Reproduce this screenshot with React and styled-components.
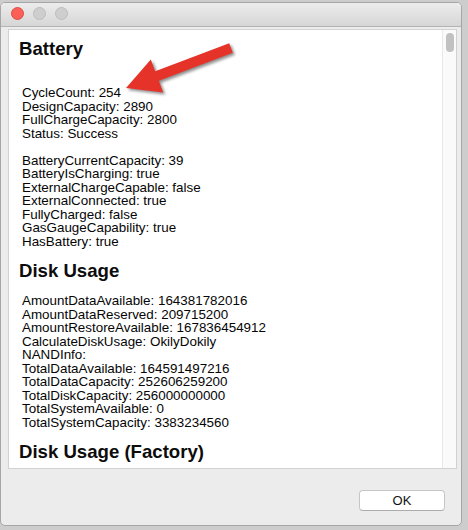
import React from 'react';
import styled, { createGlobalStyle } from 'styled-components';

const GlobalStyle = createGlobalStyle`
  html, body {
    margin: 0;
    padding: 0;
  }
  body {
    width: 468px;
    height: 530px;
    overflow: hidden;
    background: #cdcdcd;
    font-family: "Liberation Sans", Arial, sans-serif;
    color: #000;
  }
`;

const Window = styled.div`
  position: relative;
  box-sizing: border-box;
  margin-top: 2px;
  width: 462px;
  height: 524px;
  border: 1px solid #a6a6a6;
  border-radius: 5px;
  background: #ececec;
  display: flex;
  flex-direction: column;
  overflow: hidden;
`;

const TitleBar = styled.div`
  flex: none;
  height: 24px;
  box-sizing: border-box;
  padding: 4px 0 0 10px;
  display: flex;
  align-items: flex-start;
  gap: 9px;
  background: linear-gradient(#ececec, #d6d6d6);
  border-bottom: 1px solid #b4b4b4;
`;

const Light = styled.span`
  width: 11px;
  height: 11px;
  border-radius: 50%;
  background: ${p => (p.red ? '#fc5f57' : '#cecece')};
  border: 0.5px solid ${p => (p.red ? '#dd4b43' : '#bcbcbc')};
`;

const Body = styled.div`
  flex: none;
  padding: 2px 4px 0 7px;
`;

const Panel = styled.div`
  height: 440px;
  box-sizing: border-box;
  border: 1px solid #d2d2d2;
  background: #fff;
  display: flex;
  overflow: hidden;
`;

const Content = styled.div`
  flex: 1;
  padding: 8px 0 0 10px;
`;

const Heading = styled.h2`
  margin: ${p => (p.first ? '0' : '12px')} 0 13px;
  font-size: 18.6px;
  line-height: 21px;
  font-weight: bold;
  color: #0c0c0c;
`;

const Group = styled.div`
  margin-left: 3px;
  padding-top: ${p => (p.lead ? '14px' : '0')};
  & + & {
    margin-top: 13.5px;
  }
`;

const Line = styled.div`
  font-size: 13.4px;
  line-height: 13.5px;
  white-space: nowrap;
  color: #050505;
`;

const Track = styled.div`
  flex: none;
  width: 14px;
  background: #fafafa;
  border-left: 1px solid #e8e8e8;
  padding: 3px 0 0 3px;
  box-sizing: border-box;
`;

const Thumb = styled.div`
  width: 8px;
  height: 19px;
  border-radius: 4px;
  background: #c1c1c1;
`;

const Footer = styled.div`
  flex: 1;
  display: flex;
  justify-content: flex-end;
  align-items: flex-start;
  padding: 21px 16px 0 0;
`;

const Button = styled.button`
  width: 86px;
  height: 21px;
  box-sizing: border-box;
  border: 1px solid #c6c6c6;
  border-bottom-color: #acacac;
  border-radius: 4px;
  background: #fff;
  font-family: "Liberation Sans", Arial, sans-serif;
  font-size: 13px;
  color: #111;
  padding: 0;
`;

const Arrow = styled.svg`
  position: absolute;
  left: -1px;
  top: -3px;
  overflow: visible;
  filter: drop-shadow(2px 2px 1.5px rgba(0, 0, 0, 0.45));
`;

const sections = [
  {
    title: 'Battery',
    lead: true,
    groups: [
      ['CycleCount: 254', 'DesignCapacity: 2890', 'FullChargeCapacity: 2800', 'Status: Success'],
      [
        'BatteryCurrentCapacity: 39',
        'BatteryIsCharging: true',
        'ExternalChargeCapable: false',
        'ExternalConnected: true',
        'FullyCharged: false',
        'GasGaugeCapability: true',
        'HasBattery: true',
      ],
    ],
  },
  {
    title: 'Disk Usage',
    groups: [
      [
        'AmountDataAvailable: 164381782016',
        'AmountDataReserved: 209715200',
        'AmountRestoreAvailable: 167836454912',
        'CalculateDiskUsage: OkilyDokily',
        'NANDInfo:',
        'TotalDataAvailable: 164591497216',
        'TotalDataCapacity: 252606259200',
        'TotalDiskCapacity: 256000000000',
        'TotalSystemAvailable: 0',
        'TotalSystemCapacity: 3383234560',
      ],
    ],
  },
  { title: 'Disk Usage (Factory)', groups: [] },
];

export default function App() {
  return (
    <>
      <GlobalStyle />
      <Window>
        <TitleBar>
          <Light red />
          <Light />
          <Light />
        </TitleBar>
        <Body>
          <Panel>
            <Content>
              {sections.map((s, i) => (
                <section key={s.title}>
                  <Heading first={i === 0}>{s.title}</Heading>
                  {s.groups.map((g, j) => (
                    <Group key={j} lead={s.lead && j === 0}>
                      {g.map(l => (
                        <Line key={l}>{l}</Line>
                      ))}
                    </Group>
                  ))}
                </section>
              ))}
            </Content>
            <Track>
              <Thumb />
            </Track>
          </Panel>
        </Body>
        <Footer>
          <Button>OK</Button>
        </Footer>
        <Arrow width="468" height="120" viewBox="0 0 468 120">
          <polygon
            points="126,88 150.8,59.6 155.2,71.3 229.2,43.3 232.8,52.7 158.8,80.7 163.2,92.4"
            fill="#e6332a"
          />
        </Arrow>
      </Window>
    </>
  );
}
